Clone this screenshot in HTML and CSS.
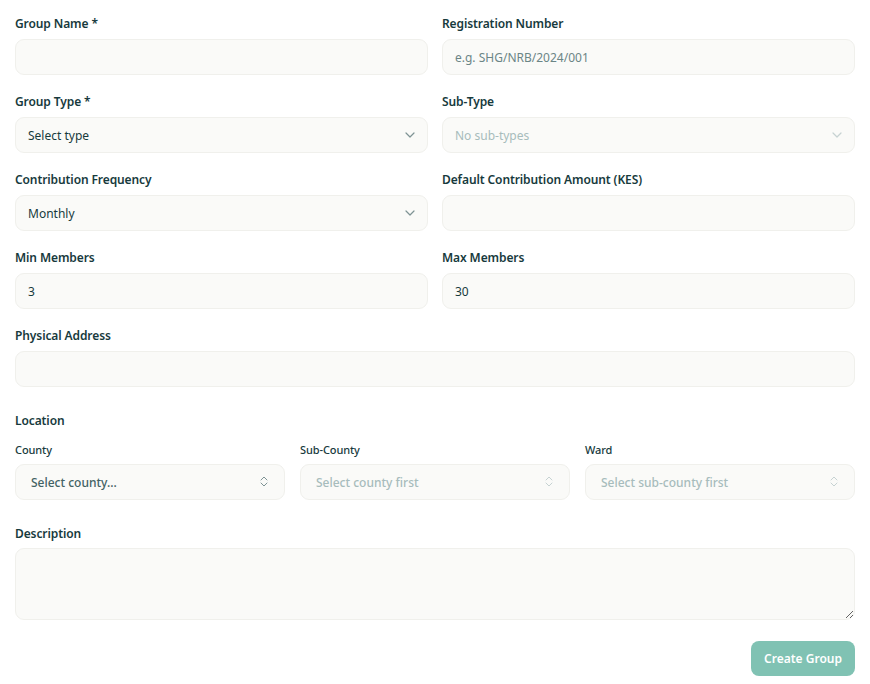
FILE: index.html
```html
<!DOCTYPE html>
<html lang="en">
<head>
    <meta charset="UTF-8">
    <meta name="viewport" content="width=device-width, initial-scale=1.0">
    <title>Create Group</title>
    <link rel="stylesheet" href="styles.css">
</head>
<body>
    <form class="group-form">
        <div class="grid two">
            <div class="field">
                <label for="name">Group Name *</label>
                <input type="text" id="name">
            </div>
            <div class="field">
                <label for="reg">Registration Number</label>
                <input type="text" id="reg" placeholder="e.g. SHG/NRB/2024/001">
            </div>

            <div class="field">
                <label for="type">Group Type *</label>
                <div class="select-wrap">
                    <select id="type"><option>Select type</option></select>
                    <svg class="chev" width="10" height="6" viewBox="0 0 10 6"><path d="M1 1l4 4 4-4" fill="none" stroke="currentColor" stroke-width="1.2" stroke-linecap="round" stroke-linejoin="round"/></svg>
                </div>
            </div>
            <div class="field">
                <label for="subtype">Sub-Type</label>
                <div class="select-wrap disabled">
                    <select id="subtype" disabled><option>No sub-types</option></select>
                    <svg class="chev" width="10" height="6" viewBox="0 0 10 6"><path d="M1 1l4 4 4-4" fill="none" stroke="currentColor" stroke-width="1.2" stroke-linecap="round" stroke-linejoin="round"/></svg>
                </div>
            </div>

            <div class="field">
                <label for="freq">Contribution Frequency</label>
                <div class="select-wrap">
                    <select id="freq"><option>Monthly</option></select>
                    <svg class="chev" width="10" height="6" viewBox="0 0 10 6"><path d="M1 1l4 4 4-4" fill="none" stroke="currentColor" stroke-width="1.2" stroke-linecap="round" stroke-linejoin="round"/></svg>
                </div>
            </div>
            <div class="field">
                <label for="amount">Default Contribution Amount (KES)</label>
                <input type="text" id="amount">
            </div>

            <div class="field">
                <label for="min">Min Members</label>
                <input type="text" id="min" value="3">
            </div>
            <div class="field">
                <label for="max">Max Members</label>
                <input type="text" id="max" value="30">
            </div>
        </div>

        <div class="field">
            <label for="address">Physical Address</label>
            <input type="text" id="address">
        </div>

        <div class="location">
            <div class="section-title">Location</div>
            <div class="grid three">
                <div class="field small">
                    <label for="county">County</label>
                    <div class="select-wrap loc">
                        <select id="county"><option>Select county...</option></select>
                        <svg class="updown" width="8" height="11" viewBox="0 0 8 11"><path d="M1 4l3-3 3 3M1 7l3 3 3-3" fill="none" stroke="currentColor" stroke-width="1" stroke-linecap="round" stroke-linejoin="round"/></svg>
                    </div>
                </div>
                <div class="field small">
                    <label for="subcounty">Sub-County</label>
                    <div class="select-wrap loc disabled">
                        <select id="subcounty" disabled><option>Select county first</option></select>
                        <svg class="updown" width="8" height="11" viewBox="0 0 8 11"><path d="M1 4l3-3 3 3M1 7l3 3 3-3" fill="none" stroke="currentColor" stroke-width="1" stroke-linecap="round" stroke-linejoin="round"/></svg>
                    </div>
                </div>
                <div class="field small">
                    <label for="ward">Ward</label>
                    <div class="select-wrap loc disabled">
                        <select id="ward" disabled><option>Select sub-county first</option></select>
                        <svg class="updown" width="8" height="11" viewBox="0 0 8 11"><path d="M1 4l3-3 3 3M1 7l3 3 3-3" fill="none" stroke="currentColor" stroke-width="1" stroke-linecap="round" stroke-linejoin="round"/></svg>
                    </div>
                </div>
            </div>
        </div>

        <div class="field description">
            <label for="desc">Description</label>
            <textarea id="desc"></textarea>
        </div>

        <div class="actions">
            <button type="submit">Create Group</button>
        </div>
    </form>
</body>
</html>
```

FILE: styles.css
```css
body {
    margin: 0;
    padding: 15px;
    background: #ffffff;
    font-family: "Noto Sans", "Open Sans", sans-serif;
    color: #173a3d;
}
.group-form {
    display: flex;
    flex-direction: column;
    gap: 18px;
}
.grid {
    display: grid;
    gap: 18px 14px;
}
.grid.two {
    grid-template-columns: 1fr 1fr;
}
.grid.three {
    grid-template-columns: 1fr 1fr 1fr;
    gap: 15px;
}
.field {
    display: flex;
    flex-direction: column;
}
label {
    display: block;
    font-size: 12px;
    line-height: 17px;
    font-weight: 600;
    letter-spacing: -0.1px;
    color: #173a3d;
    margin-bottom: 7px;
}
.field.small label {
    font-size: 11px;
    line-height: 16px;
    font-weight: 500;
    margin-bottom: 6px;
}
input, select, textarea {
    width: 100%;
    box-sizing: border-box;
    height: 36px;
    padding: 0 12px;
    border: 1px solid #f0f0ec;
    border-radius: 9px;
    background: #fafaf8;
    font-family: inherit;
    font-size: 12px;
    color: #173a3d;
    outline: none;
}
input::placeholder {
    color: #6b8586;
}
select {
    appearance: none;
    -webkit-appearance: none;
}
select:disabled {
    color: #a7bcbc;
    opacity: 1;
}
.select-wrap {
    position: relative;
    color: #7e9394;
}
.select-wrap.disabled {
    color: #c6d2d2;
}
.chev {
    position: absolute;
    right: 13px;
    top: 15px;
}
.updown {
    position: absolute;
    right: 17px;
    top: 12px;
}
.select-wrap.loc select {
    padding-left: 15px;
    font-weight: 500;
    color: #436264;
}
.select-wrap.loc select:disabled {
    color: #a7bcbc;
}
.location {
    margin-top: 8px;
}
.section-title {
    font-size: 12px;
    line-height: 16px;
    font-weight: 600;
    letter-spacing: -0.1px;
    margin-bottom: 13px;
}
.description {
    margin-top: 7px;
}
.description label {
    margin-bottom: 6px;
}
textarea {
    height: 72px;
    padding: 10px 12px;
    resize: vertical;
}
.actions {
    display: flex;
    justify-content: flex-end;
    margin-top: 3px;
}
button {
    height: 35px;
    padding: 0 13px;
    border: none;
    border-radius: 8px;
    background: #80c2b3;
    color: #ffffff;
    font-family: inherit;
    font-size: 12px;
    font-weight: 600;
    cursor: pointer;
}
```
